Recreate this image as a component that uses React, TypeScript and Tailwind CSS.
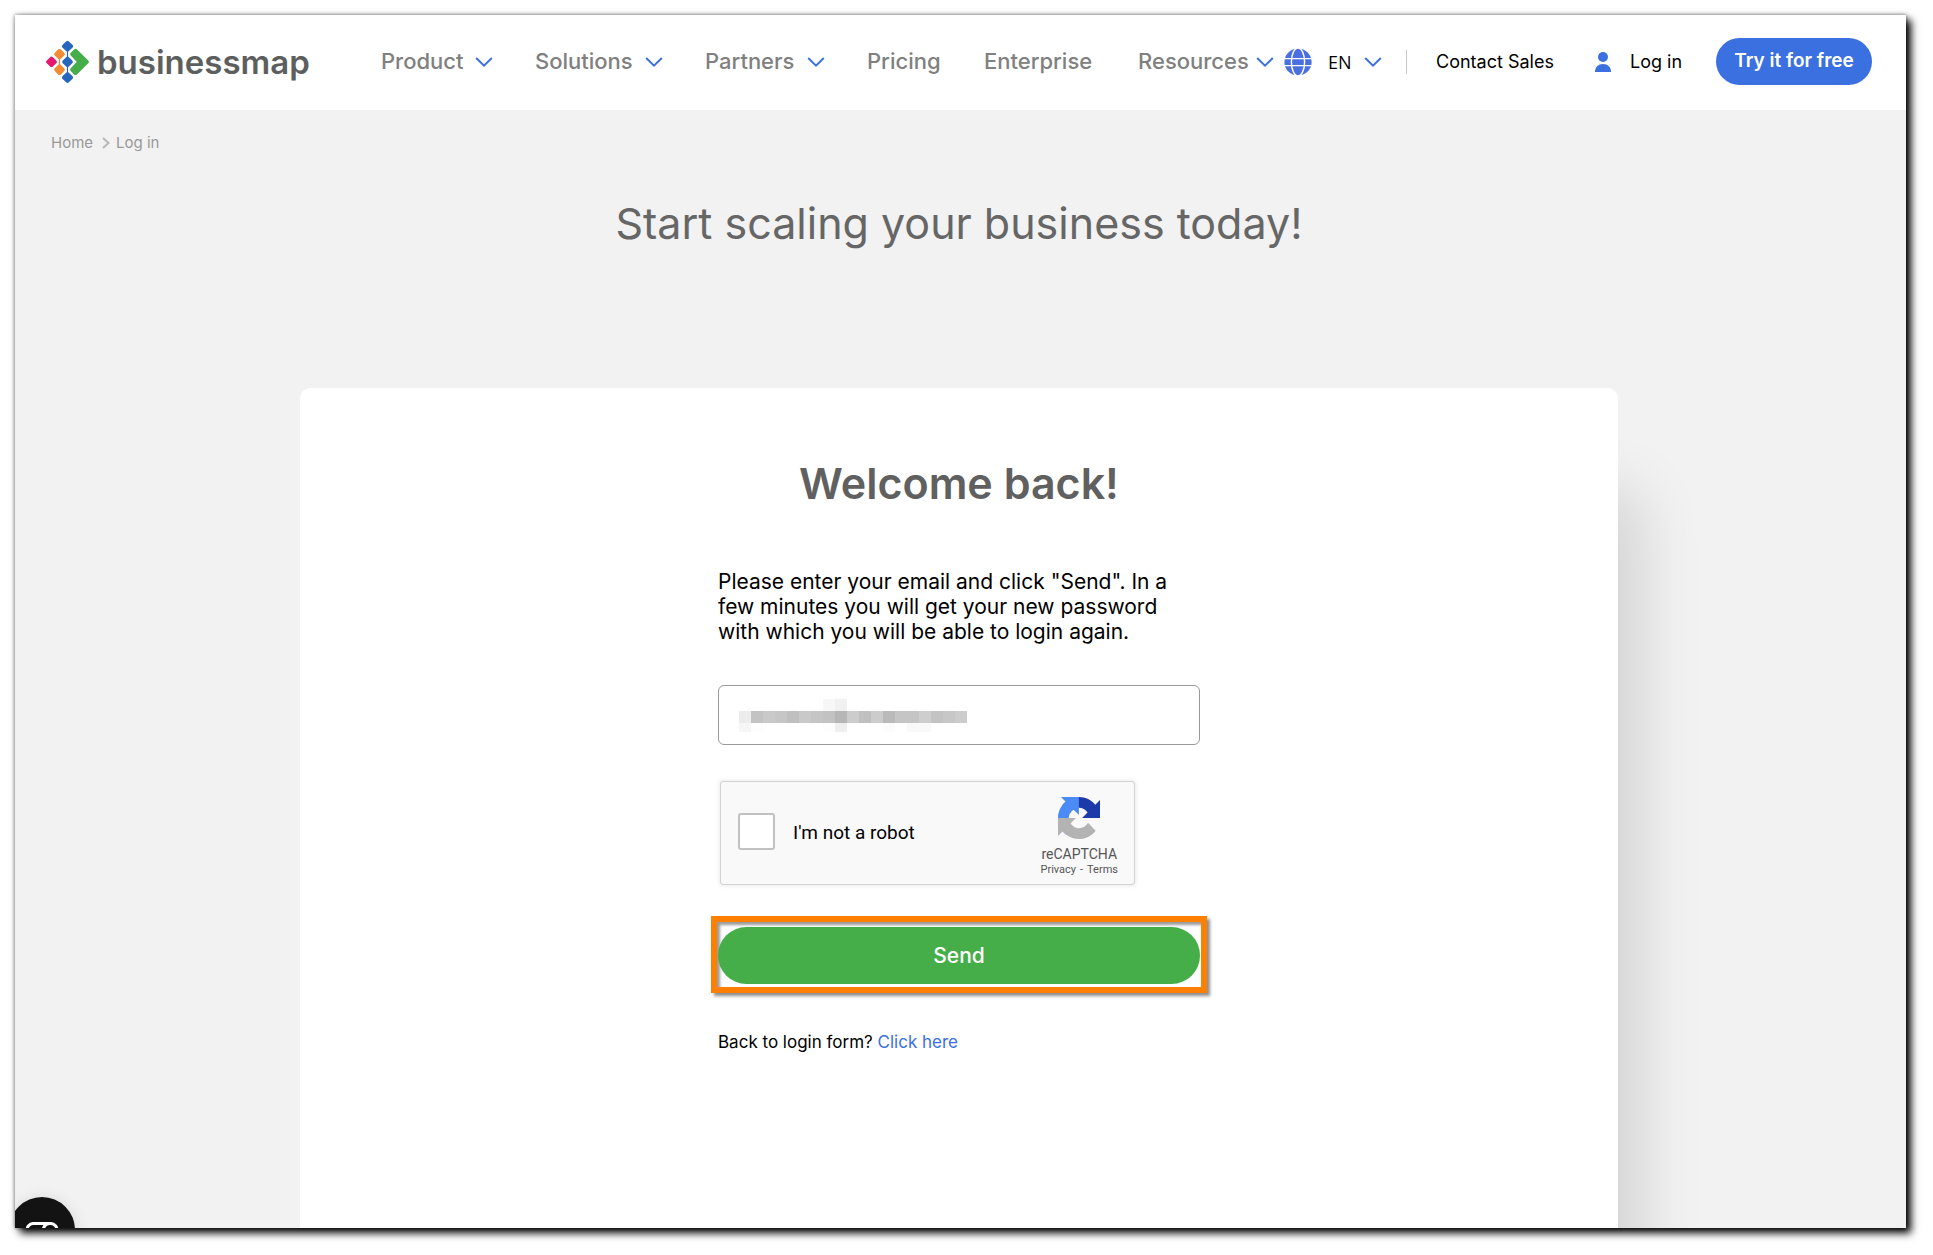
import React from "react";

const NAV = [
  { label: "Product", menu: true, width: "w-28" },
  { label: "Solutions", menu: true, width: "w-32" },
  { label: "Partners", menu: true, width: "w-30" },
  { label: "Pricing", menu: false, width: "w-[75px]" },
  { label: "Enterprise", menu: false, width: "w-28" },
  { label: "Resources", menu: true, width: "w-34" },
];

function Chevron() {
  return (
    <svg className="h-3 w-[18px] shrink-0" viewBox="0 0 18 12" fill="none" aria-hidden="true">
      <path d="M1.2 2 9 9.6 16.8 2" stroke="#3b70e0" strokeWidth="2" />
    </svg>
  );
}

function LogoMark() {
  return (
    <svg className="h-[42px] w-[43px] shrink-0" viewBox="0 0 43 42" aria-hidden="true">
      <path d="M21.5 5v32" stroke="#2666bf" strokeWidth="1.2" />
      <path d="M13.5 13v16" stroke="#f38b32" strokeWidth="1.2" />
      <g strokeWidth="4" strokeLinejoin="round">
        <g fill="#2666bf" stroke="#2666bf">
          <path d="M21.5 2 25 5.3 21.5 8.600 18 5.3Z" />
          <path d="M21.5 17.600 24.8 20.9 21.5 24.2 18.2 20.9Z" />
          <path d="M21.5 33.200 25 36.5 21.5 39.800 18 36.5Z" />
        </g>
        <g fill="#f38b32" stroke="#f38b32">
          <path d="M13.5 9.800 16.8 13.1 13.5 16.4 10.2 13.1Z" />
          <path d="M13.5 25.4 16.8 28.7 13.5 32 10.2 28.7Z" />
        </g>
        <path d="M5.5 17.600 8.800 20.9 5.5 24.2 2.2 20.9Z" fill="#e5196e" stroke="#e5196e" />
        <path d="M29.5 9.800 40.8 20.9 29.5 32 26.2 28.700 33.500 20.9 26.2 13.1Z" fill="#45ae49" stroke="#45ae49" />
      </g>
    </svg>
  );
}

function Globe() {
  return (
    <svg className="size-7 shrink-0" viewBox="0 0 28 28" fill="none" aria-hidden="true">
      <circle cx="14" cy="14" r="13.6" fill="#4a6fe0" />
      <g stroke="#fff" strokeWidth="1.4">
        <path d="M0 10.600h28M0 17.600h28" />
        <ellipse cx="14" cy="14" rx="6.6" ry="14" />
      </g>
    </svg>
  );
}

function Person() {
  return (
    <svg className="h-5 w-4 shrink-0" viewBox="0 0 16 20" fill="#3b70e0" aria-hidden="true">
      <circle cx="8" cy="5" r="5" />
      <path d="M0 20c0-5 3.2-8 8-8s8 3 8 8Z" />
    </svg>
  );
}

function RecaptchaLogo() {
  return (
    <svg className="size-[42px]" viewBox="0 0 64 64" aria-hidden="true">
      <path fill="#1c3aa9" d="M64 31.955l-.033-1.37V4.687l-7.16 7.16C50.948 4.674 42.033.093 32.05.093c-10.4 0-19.622 4.96-25.458 12.64l11.736 11.86a15.55 15.55 0 0 1 4.754-5.334c2.05-1.6 4.952-2.906 8.968-2.906.485 0 .86.057 1.135.163 4.976.393 9.288 3.14 11.828 7.124l-8.307 8.307L64 31.953" />
      <path fill="#4a8bf5" d="M31.862.094l-1.37.033H4.594l7.16 7.16C4.58 13.147 0 22.06 0 32.046c0 10.4 4.96 19.622 12.64 25.458L24.5 45.768a15.55 15.55 0 0 1-5.334-4.754c-1.6-2.05-2.906-4.952-2.906-8.968 0-.485.057-.86.163-1.135.393-4.976 3.14-9.288 7.124-11.828l8.307 8.307L31.86.095" />
      <path fill="#b3b3b3" d="M.001 32.045l.033 1.37v25.898l7.16-7.16c5.86 7.173 14.774 11.754 24.76 11.754 10.4 0 19.622-4.96 25.458-12.64l-11.736-11.86a15.55 15.55 0 0 1-4.754 5.334c-2.05 1.6-4.952 2.906-8.968 2.906-.485 0-.86-.057-1.135-.163-4.976-.393-9.288-3.14-11.828-7.124l8.307-8.307c-10.522.04-22.4.066-27.295-.005" />
    </svg>
  );
}

const MASK_TOP: Record<number, string> = { 7: "#f7f7f7", 8: "#f1f1f1" };
const MASK_MIDDLE = [
  "#ececec", "#c3c3c3", "#c9c9c9", "#c6c6c6", "#bfbfbf", "#c9c9c9", "#c5c5c5", "#c2c2c2", "#b6b6b6", "#cccccc",
  "#c0c0c0", "#cccccc", "#bababa", "#c5c5c5", "#c5c5c5", "#cecece", "#c3c3c3", "#c7c7c7", "#cccccc",
];
const MASK_BOTTOM: Record<number, string> = { 0: "#f6f6f6", 1: "#fdfdfd", 7: "#fdfdfd", 8: "#efefef", 12: "#fcfcfc", 14: "#f9f9f9", 15: "#f9f9f9" };

function MaskedValue() {
  return (
    <svg className="pointer-events-none absolute top-3.5 left-[21px] h-[33px] w-57" viewBox="0 0 228 33" shapeRendering="crispEdges" aria-hidden="true">
      {MASK_MIDDLE.map((c, i) => (
        <g key={i}>
          {MASK_TOP[i] && <rect x={i * 12} y="0" width="12" height="12" fill={MASK_TOP[i]} />}
          <rect x={i * 12} y="12" width="12" height="12" fill={c} />
          {MASK_BOTTOM[i] && <rect x={i * 12} y="24" width="12" height="9" fill={MASK_BOTTOM[i]} />}
        </g>
      ))}
    </svg>
  );
}

export default function App() {
  return (
    <div className="flex min-h-screen flex-col bg-white pt-[15px] pr-[27px] pb-[27px] pl-[15px] font-['Inter',sans-serif] text-black">
      <div className="relative flex flex-1 flex-col bg-[#f2f2f2] shadow-[0_0_4px_rgba(0,0,0,0.55),5px_5px_8px_#000]">
        <div className="flex flex-1 flex-col overflow-hidden">
          <header className="flex h-[95px] shrink-0 items-center bg-white pr-[34px] pb-0.5 pl-[31px] whitespace-nowrap">
            <a href="#" className="flex w-[266px] items-center gap-2">
              <LogoMark />
              <span className="text-[33px] leading-9 font-semibold text-[#5d5f5e]">businessmap</span>
            </a>
            <nav className="ml-[69px] flex items-center gap-[42px]">
              {NAV.map((item) =>
                item.menu ? (
                  <button key={item.label} type="button" className={`flex items-center justify-between text-[22px] font-medium text-[#808080] ${item.width}`}>
                    {item.label}
                    <Chevron />
                  </button>
                ) : (
                  <a key={item.label} href="#" className={`text-[22px] font-medium text-[#808080] ${item.width}`}>
                    {item.label}
                  </a>
                ),
              )}
            </nav>
            <button type="button" className="ml-2.5 flex items-center">
              <Globe />
              <span className="ml-4 w-9 text-left font-['Open_Sans',sans-serif] text-lg">EN</span>
              <Chevron />
            </button>
            <span className="ml-6 h-6 w-px bg-[#c8c8c8]" />
            <div className="ml-auto flex items-center">
              <a href="#" className="w-[159px] text-lg">Contact Sales</a>
              <a href="#" className="flex w-[121px] items-center gap-[19px] text-lg">
                <Person />
                Log in
              </a>
              <button type="button" className="h-[47px] w-[156px] rounded-full bg-[#3b70e0] text-[19px] font-semibold text-white">
                Try it for free
              </button>
            </div>
          </header>

          <nav aria-label="Breadcrumb" className="mt-[23px] ml-9 flex items-center text-[15px] leading-5 text-[#999]">
            <a href="#" className="w-[51px]">Home</a>
            <svg className="mr-1.5 h-3 w-2" viewBox="0 0 8 12" fill="none" aria-hidden="true">
              <path d="M1 1 6.500 6 1 11" stroke="#b8b8b8" strokeWidth="2" />
            </svg>
            <span>Log in</span>
          </nav>

          <div className="flex flex-1 flex-col pr-[3px]">
            <h1 className="mt-[45px] text-center text-[43px] leading-[50px] text-[#666]">Start scaling your business today!</h1>

            <main className="mx-auto mt-[140px] flex w-full max-w-[1318px] flex-1 flex-col items-center rounded-t-[10px] bg-white shadow-[40px_85px_60px_-20px_rgba(0,0,0,0.14)]">
              <form className="mt-[70px] flex w-[482px] max-w-full flex-col pb-40" onSubmit={(e) => e.preventDefault()}>
                <h2 className="text-center text-[43px] leading-[50px] font-semibold whitespace-nowrap text-[#606060]">Welcome back!</h2>
                <p className="mt-[61px] text-[21px] leading-[25px] whitespace-nowrap">
                  Please enter your email and click "Send". In a
                  <br />
                  few minutes you will get your new password
                  <br />
                  with which you will be able to login again.
                </p>
                <div className="relative mt-[41px]">
                  <input type="email" aria-label="Email" className="block h-[60px] w-full rounded-md border border-[#999] bg-white px-5 text-lg" />
                  <MaskedValue />
                </div>
                <div className="mt-9 ml-0.5 flex h-[104px] w-[415px] items-center rounded-[3px] border border-[#d3d3d3] bg-[#f9f9f9] pl-[17px] font-['Roboto',sans-serif] shadow-[0_0_4px_1px_rgba(0,0,0,0.08)]">
                  <input id="robot" type="checkbox" className="mb-1 size-[37px] appearance-none rounded-[3px] border-2 border-[#c1c1c1] bg-white" />
                  <label htmlFor="robot" className="ml-[18px] text-[19px]">I'm not a robot</label>
                  <div className="mt-2 mr-4 ml-auto flex flex-col items-center text-[#555]">
                    <RecaptchaLogo />
                    <span className="mt-1.5 text-sm leading-[18px]">reCAPTCHA</span>
                    <span className="flex gap-1 text-[11px] leading-[14px]">
                      <a href="#">Privacy</a>
                      <span>-</span>
                      <a href="#">Terms</a>
                    </span>
                  </div>
                </div>
                <div className="-mx-[7px] mt-[31px] border-6 border-[#ff8000] px-px pt-[5px] pb-[3px] shadow-[3px_3px_3px_rgba(0,0,0,0.45),inset_3px_3px_3px_rgba(0,0,0,0.4)]">
                  <button type="submit" className="block h-[57px] w-full rounded-full bg-[#45ae49] text-[21px] font-medium text-white">
                    Send
                  </button>
                </div>
                <p className="mt-[37px] text-[17px] leading-6">
                  Back to login form?{" "}
                  <a href="#" className="text-[#3b70e0]">Click here</a>
                </p>
              </form>
            </main>
          </div>
        </div>

        <div className="pointer-events-none absolute bottom-0 left-0 h-20 w-32 overflow-hidden">
          <button type="button" aria-label="Open chat" className="pointer-events-auto absolute top-[49px] -left-1.5 flex size-[66px] justify-center rounded-full bg-[#131313] pt-6 shadow-[0_2px_16px_rgba(0,0,0,0.12)]">
            <svg className="h-6 w-9" viewBox="0 0 36 24" fill="none" stroke="#fff" strokeWidth="3" aria-hidden="true">
              <path d="M9 2.500h18a6.500 6.500 0 0 1 6 7v5a6.500 6.500 0 0 1-6 7H9a6.500 6.500 0 0 1-6-7v-5a6.500 6.500 0 0 1 6-7Z" />
              <path d="M26 2.500c-5 0-7 4-7 9" />
            </svg>
          </button>
        </div>
      </div>
    </div>
  );
}
